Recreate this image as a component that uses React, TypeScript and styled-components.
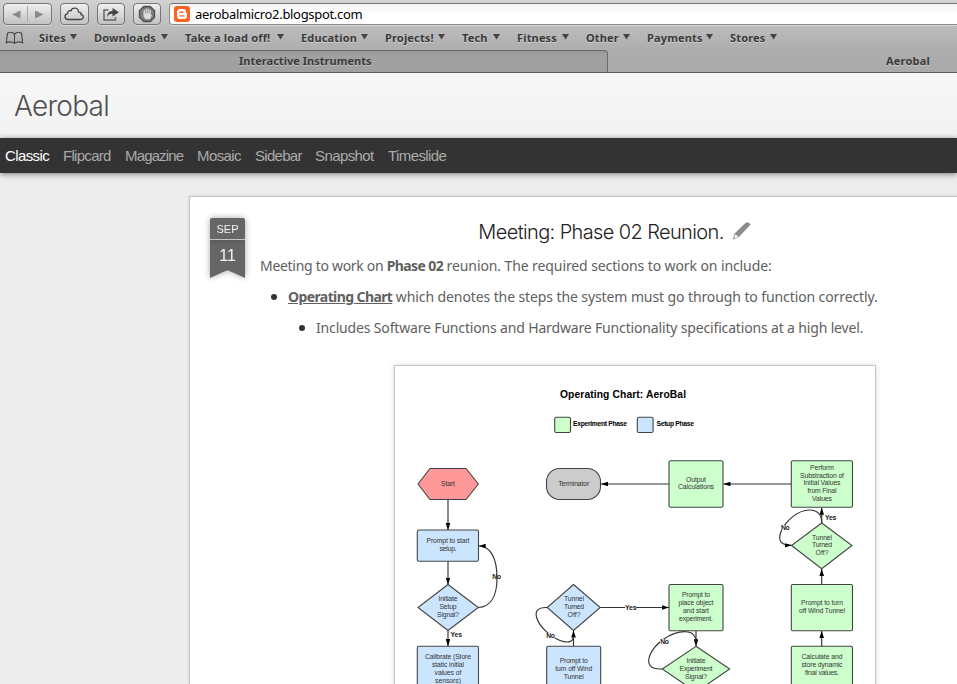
import React from 'react';
import styled, { createGlobalStyle } from 'styled-components';

const GlobalStyle = createGlobalStyle`
  html, body { margin: 0; padding: 0; overflow: hidden; background: #ededed; }
  * { box-sizing: border-box; }
`;

const Window = styled.div`
  width: 957px;
  height: 684px;
  overflow: hidden;
  display: flex;
  flex-direction: column;
  background: #ededed;
  font-family: 'Liberation Sans', Arial, sans-serif;
`;

/* ---------- browser chrome ---------- */

const Chrome = styled.div`
  height: 73px;
  flex: none;
  display: flex;
  flex-direction: column;
  background: linear-gradient(#d2d2d2 0, #bdbdbd 26px, #adadad 50px, #aaaaaa 72px);
  border-bottom: 1px solid #5e5e5e;
  font-family: 'Noto Sans', 'Open Sans', sans-serif;
`;

const AddressRow = styled.div`
  height: 25px;
  display: flex;
  align-items: flex-start;
  padding: 3px 0 0 3px;
`;

const ToolButton = styled.div<{ $w: number; $gap: number }>`
  width: ${(p) => p.$w}px;
  height: 22px;
  margin-right: ${(p) => p.$gap}px;
  flex: none;
  display: flex;
  align-items: center;
  justify-content: center;
  border: 1px solid #777;
  border-radius: 4px;
  background: linear-gradient(#efefef, #c2c2c2);
  box-shadow: 0 1px 0 rgba(255, 255, 255, 0.35);
  svg { display: block; }
`;

const AddressField = styled.div`
  height: 22px;
  flex: 1;
  display: flex;
  align-items: center;
  padding-left: 4px;
  background: linear-gradient(#f3f3f3, #fff 50%);
  border: 1px solid #8b8b8b;
  border-top-color: #747474;
  border-right: 0;
  border-radius: 4px 0 0 4px;
  box-shadow: 0 1px 0 rgba(255, 255, 255, 0.4);
`;

const Url = styled.span`
  margin-left: 5px;
  font-size: 13px;
  line-height: 18px;
  letter-spacing: -0.32px;
  color: #000;
  white-space: nowrap;
`;

const BookmarkRow = styled.div`
  height: 25px;
  display: flex;
  align-items: center;
  padding-left: 5px;
`;

const BookIcon = styled.svg`
  width: 19px;
  height: 14px;
  margin-right: 15px;
  flex: none;
`;

const Bookmark = styled.div<{ $w: number }>`
  width: ${(p) => p.$w}px;
  margin-right: 17px;
  flex: none;
  display: flex;
  align-items: center;
  justify-content: space-between;
  font-size: 11px;
  font-weight: 700;
  line-height: 16px;
  letter-spacing: 0.16px;
  color: #3a3a3a;
  text-shadow: 0 1px 0 rgba(255, 255, 255, 0.4);
  white-space: nowrap;
  svg { margin-bottom: 1px; }
`;

const TabRow = styled.div`
  height: 22px;
  display: flex;
  font-size: 11px;
  font-weight: 700;
  line-height: 19px;
  color: #3a3a3a;
  text-shadow: 0 1px 0 rgba(255, 255, 255, 0.35);
`;

const InactiveTab = styled.div`
  width: 608px;
  padding-left: 239px;
  background: linear-gradient(#989898, #a1a1a1 5px, #a0a0a0);
  border-top: 1px solid #686868;
  border-right: 1px solid #686868;
  border-radius: 0 4px 0 0;
  letter-spacing: 0.02px;
  white-space: nowrap;
`;

const ActiveTab = styled.div`
  flex: 1;
  padding: 1px 0 0 278px;
  letter-spacing: 0.2px;
  white-space: nowrap;
`;

/* ---------- blog ---------- */

const BlogHeader = styled.header`
  height: 65px;
  flex: none;
  padding: 16px 0 0 14px;
  background: linear-gradient(#f7f7f7, #f2f2f2);
`;

const BlogTitle = styled.h1`
  margin: 0;
  font: 300 28px/34px Inter, 'Liberation Sans', sans-serif;
  letter-spacing: -0.75px;
  color: #505050;
`;

const Nav = styled.nav`
  height: 35px;
  flex: none;
  display: flex;
  gap: 14px;
  padding-left: 5px;
  background: #333;
  box-shadow: 0 1px 6px rgba(0, 0, 0, 0.5);
  z-index: 1;
`;

const NavItem = styled.a<{ $w: number; $ls: number; $active?: boolean }>`
  width: ${(p) => p.$w}px;
  font-size: 15px;
  line-height: 36px;
  letter-spacing: ${(p) => p.$ls}px;
  color: ${(p) => (p.$active ? '#fff' : '#aaa')};
  white-space: nowrap;
`;

const Card = styled.main`
  width: 852px;
  flex: 1;
  min-height: 0;
  margin: 23px 0 0 189px;
  display: flex;
  align-items: flex-start;
  padding: 21px 0 0 20px;
  background: #fff;
  border: 1px solid #c6c6c6;
  border-bottom: 0;
  box-shadow: 0 0 3px rgba(0, 0, 0, 0.12);
`;

const RibbonShadow = styled.div`
  flex: none;
  filter: drop-shadow(0 0 3px rgba(0, 0, 0, 0.35));
`;

const Ribbon = styled.div`
  width: 35px;
  height: 60px;
  border-radius: 2px 2px 0 0;
  background: #666;
  clip-path: polygon(0 0, 100% 0, 100% 100%, 50% 52px, 0 100%);
  color: #f4f4f4;
  text-align: center;
`;

const Month = styled.div`
  height: 22px;
  border-bottom: 1px solid #c4c4c4;
  font-size: 11px;
  line-height: 23px;
`;

const Day = styled.div`
  font-size: 16px;
  line-height: 32px;
  background: linear-gradient(#5c5c5c, #666 5px);
`;

const Post = styled.article`
  width: 710px;
  margin-left: 15px;
  flex: none;
  font-family: 'Noto Sans', 'Open Sans', sans-serif;
  font-size: 14px;
  line-height: 21px;
  color: #606060;
  white-space: nowrap;
`;

const PostTitle = styled.h2`
  display: flex;
  justify-content: center;
  align-items: center;
  gap: 8px;
  height: 28px;
  margin: 0 0 9px;
  font: 300 20px/28px Inter, 'Liberation Sans', sans-serif;
  letter-spacing: -0.62px;
  color: #222;
  svg { margin-bottom: 2px; }
`;

const Line = styled.div<{ $indent: number; $ls: number }>`
  height: 21px;
  margin-bottom: 10px;
  padding-left: ${(p) => p.$indent}px;
  display: flex;
  align-items: center;
  white-space: pre;
  letter-spacing: ${(p) => p.$ls}px;
`;

const Tight = styled.span`
  letter-spacing: -0.3px;
`;

const Strong = styled.b<{ $underlined?: boolean }>`
  letter-spacing: -0.6px;
  text-decoration: ${(p) => (p.$underlined ? 'underline' : 'none')};
`;

const Dot = styled.i`
  width: 6px;
  height: 6px;
  margin-right: 11px;
  border-radius: 50%;
  background: #333;
`;

const Figure = styled.figure`
  width: 482px;
  height: 400px;
  margin: 27px 0 0 134px;
  border: 1px solid #c4c4c4;
  background: #fff;
  box-shadow: 0 0 6px rgba(0, 0, 0, 0.14);
  svg { display: block; }
`;

const bookmarks: [string, number][] = [
  ['Sites', 38], ['Downloads', 74], ['Take a load off!', 99], ['Education', 67],
  ['Projects!', 60], ['Tech', 38], ['Fitness', 52], ['Other', 44], ['Payments', 66], ['Stores', 47],
];

/* name, width, letter spacing */
const views: [string, number, number][] = [
  ['Classic', 44, -0.6], ['Flipcard', 48, -0.7], ['Magazine', 58, -0.85], ['Mosaic', 44, -0.6],
  ['Sidebar', 46, -0.7], ['Snapshot', 59, -0.6], ['Timeslide', 58, -0.6],
];

const GREEN = '#ccffcc';
const BLUE = '#cce5ff';

/* [text, width] */
type TextLine = [string, number];

const Label = ({ x, y, lines }: { x: number; y: number; lines: TextLine[] }) => (
  <g fontSize="6.8" fill="#333" textAnchor="middle">
    {lines.map(([t, w], i) => (
      <text key={i} x={x} y={y + i * 7.8} textLength={w}>{t}</text>
    ))}
  </g>
);

const Box = ({ x, y, w, h, fill }: { x: number; y: number; w: number; h: number; fill: string }) => (
  <rect x={x} y={y} width={w} height={h} rx="1.5" fill={fill} />
);

const Arrow = ({ d }: { d: string }) => <path d={d} markerEnd="url(#arrow)" />;

const Chart = () => (
  <svg width="480" height="398" viewBox="395 366 480 398" fontFamily="'Liberation Sans', Arial, sans-serif">
    <defs>
      <marker id="arrow" viewBox="0 0 7 4.6" refX="7" refY="2.3" markerWidth="7" markerHeight="4.6" markerUnits="userSpaceOnUse" orient="auto">
        <path d="M0 0 7 2.3 0 4.6Z" fill="#000" />
      </marker>
    </defs>
    <g fontWeight="700" fill="#000">
      <text x="560" y="398" fontSize="10.3" textLength="126">Operating Chart: AeroBal</text>
      <text x="573" y="426.3" fontSize="6.8" textLength="54">Experiment Phase</text>
      <text x="656.5" y="426.3" fontSize="6.8" textLength="37.5">Setup Phase</text>
    </g>
    <g stroke="#444" strokeWidth="1.1">
      <rect x="554.7" y="417.2" width="15.8" height="15.3" rx="1.5" fill={GREEN} />
      <rect x="637.3" y="417.2" width="15.8" height="15.3" rx="1.5" fill={BLUE} />
      <path d="M418 484 430 468.5H466L478.3 484 466 499.5H430Z" fill="#ff9999" />
      <rect x="546.5" y="468.5" width="54" height="31" rx="13" fill="#ccc" />
      <Box x={669} y={460.7} w={54} h={46.6} fill={GREEN} />
      <Box x={791.3} y={460.7} w={61.2} h={46.6} fill={GREEN} />
      <Box x={417.3} y={530} w={61.2} h={31.3} fill={BLUE} />
      <path d="M448 584.5 478.3 607.5 448 630.5 418 607.5Z" fill={BLUE} />
      <Box x={417.3} y={646.2} w={61.2} h={55} fill={BLUE} />
      <path d="M573.5 584.5 600.2 607.5 573.5 630.5 547.2 607.5Z" fill={BLUE} />
      <Box x={546.7} y={646.2} w={54} h={55} fill={BLUE} />
      <Box x={669} y={584.5} w={54} h={46.3} fill={GREEN} />
      <path d="M696 646.3 729.7 669 696 692 662.3 669Z" fill={GREEN} />
      <path d="M821.7 523 852 545.5 821.7 568.7 791.5 545.5Z" fill={GREEN} />
      <Box x={791.3} y={584.5} w={61.2} h={46.3} fill={GREEN} />
      <Box x={791.3} y={646.2} w={61.2} h={55} fill={GREEN} />
    </g>
    <g stroke="#333" strokeWidth="1.15" fill="none">
      <Arrow d="M791 484H723.5" />
      <Arrow d="M669 484H601" />
      <Arrow d="M448 500V530" />
      <Arrow d="M448 561.5V584.5" />
      <Arrow d="M448 630.5V646" />
      <Arrow d="M478.3 607.5C490 607 497 597 497 578C497 559 491 546 478.7 546" />
      <Arrow d="M600.2 607.5H669" />
      <Arrow d="M573.5 646V630.5" />
      <path d="M547.2 607.5C538 607 535 611 536.5 617C539 627 551 637 560 640.5C568 643.5 573.5 642 573.5 636" />
      <Arrow d="M696 631V646.3" />
      <path d="M662.3 669C651 669.5 646 665 650 655C654 645 670 631 686 631.7C693 632 696 636 696 642" />
      <Arrow d="M821.7 523V507.7" />
      <Arrow d="M821.7 523C822 514 817 510 809 510C798 510 784 522 780.5 533C778 541 781 545.3 791.5 545.3" />
      <Arrow d="M821.7 584.5V568.9" />
      <Arrow d="M821.7 646V631" />
    </g>
    <g fill="#fff">
      <rect x="493.5" y="574.5" width="2.5" height="5" />
      <rect x="546" y="633" width="9" height="5" />
      <rect x="625" y="605" width="11" height="5" />
      <rect x="660" y="639" width="9" height="5" />
      <rect x="781" y="525" width="9" height="5" />
    </g>
    <g fontSize="6.8" fontWeight="700" fill="#222">
      <text x="492.3" y="579.4" textLength="8.8">No</text>
      <text x="450.5" y="637.4" textLength="11.5">Yes</text>
      <text x="546.3" y="638" textLength="8.6">No</text>
      <text x="625" y="610" textLength="11.5">Yes</text>
      <text x="660.3" y="643.5" textLength="8.6">No</text>
      <text x="781" y="529.5" textLength="8.6">No</text>
      <text x="825" y="520" textLength="11.2">Yes</text>
    </g>
    <Label x={448} y={485.8} lines={[['Start', 14]]} />
    <Label x={573.7} y={485.8} lines={[['Terminator', 31]]} />
    <Label x={696} y={481.6} lines={[['Output', 20], ['Calculations', 36]]} />
    <Label x={822} y={469.8} lines={[['Perform', 24], ['Substraction of', 44], ['Initial Values', 37], ['from Final', 29], ['Values', 20]]} />
    <Label x={448} y={543.2} lines={[['Prompt to start', 43], ['setup.', 17]]} />
    <Label x={448} y={601.3} lines={[['Initiate', 19], ['Setup', 17], ['Signal?', 22]]} />
    <Label x={448} y={659.2} lines={[['Calibrate (Store', 46], ['static initial', 32], ['values of', 27], ['sensors)', 26]]} />
    <Label x={574} y={601.3} lines={[['Tunnel', 20], ['Turned', 20], ['Off?', 13]]} />
    <Label x={573.7} y={663} lines={[['Prompt to', 28], ['turn off Wind', 37], ['Tunnel', 20]]} />
    <Label x={696} y={597.2} lines={[['Prompt to', 28], ['place object', 35], ['and start', 26], ['experiment.', 34]]} />
    <Label x={696} y={663} lines={[['Initiate', 19], ['Experiment', 33], ['Signal?', 22]]} />
    <Label x={822} y={539.6} lines={[['Tunnel', 20], ['Turned', 20], ['Off?', 13]]} />
    <Label x={822} y={605.2} lines={[['Prompt to turn', 42], ['off Wind Tunnel', 46]]} />
    <Label x={822} y={659.2} lines={[['Calculate and', 41], ['store dynamic', 41], ['final values.', 34]]} />
  </svg>
);

export default function App() {
  return (
    <Window>
      <GlobalStyle />
      <Chrome>
        <AddressRow>
          <ToolButton $w={49} $gap={8}>
            <svg width="47" height="20">
              <path d="M16.5 6.5V14.5L8 10.5ZM31 6.5V14.5L39.5 10.5Z" fill="#8a8a8a" />
              <path d="M23.5 2V18" stroke="#aaa" />
            </svg>
          </ToolButton>
          <ToolButton $w={29} $gap={8}>
            <svg width="21" height="16" fill="none" stroke="#444" strokeWidth="1.3">
              <path d="M4.5 13.5C.3 13.5-.2 8.4 3.6 7.6 3.6 5 5.4 4.3 6.8 4.9 8.4.9 14.3 1.2 14.6 6.2 17 6 17.6 7.4 17 8.6 20.5 9.2 19.8 13.5 16.5 13.5Z" />
            </svg>
          </ToolButton>
          <ToolButton $w={28} $gap={8}>
            <svg width="18" height="16" fill="none" stroke="#666" strokeWidth="1.5">
              <path d="M6.5 4H2V14H13.5V11" />
              <path d="M5 11C5 7 7.5 5 10.5 5V2L17 6.3 10.5 10.5V7.7C8 7.5 6 8.5 5 11Z" fill="#444" stroke="none" />
            </svg>
          </ToolButton>
          <ToolButton $w={28} $gap={8}>
            <svg width="18" height="18">
              <path d="M5.5.8H12.5L17.2 5.5V12.5L12.5 17.2H5.5L.8 12.5V5.5Z" fill="#505050" />
              <path d="M6 2.2H12L15.8 6V12L12 15.8H6L2.2 12V6Z" fill="#7d7d7d" />
              <path d="M6.2 9V5.6M8.2 8V4.2M10.2 8V4.2M12.1 9V5.4" stroke="#dcdcdc" strokeWidth="1.3" strokeLinecap="round" />
              <path d="M5.6 8.3H12.7V10.5L13.8 9.8 14 10.6 11.8 14.2H7.7L5.6 11.8Z" fill="#dcdcdc" />
            </svg>
          </ToolButton>
          <AddressField>
            <svg width="16" height="16">
              <rect width="16" height="16" rx="3" fill="#fb6423" />
              <path d="M6 3H9Q12 3 12 6V6.6Q12 7 12.7 7 13 7 13 8V10Q13 13 10 13H6Q3 13 3 10V6Q3 3 6 3Z" fill="#fff" />
              <path d="M6 6.2H8.8M6 9.9H10" stroke="#fb6423" strokeWidth="1.4" strokeLinecap="round" />
            </svg>
            <Url>aerobalmicro2.blogspot.com</Url>
          </AddressField>
        </AddressRow>
        <BookmarkRow>
          <BookIcon viewBox="0 0 19 14" fill="none" stroke="#444" strokeWidth="1.1">
            <path d="M9.5 3C7.5 1 4.5 1 2.5 2.2L1.3 11.8C4 10.6 7 10.6 9.5 12.4 12 10.6 15 10.6 17.7 11.8L16.5 2.2C14.5 1 11.5 1 9.5 3ZV12.4" />
          </BookIcon>
          {bookmarks.map(([name, w]) => (
            <Bookmark key={name} $w={w}>
              {name}
              <svg width="7" height="6"><path d="M0 0H7L3.5 5.6Z" fill="#444" /></svg>
            </Bookmark>
          ))}
        </BookmarkRow>
        <TabRow>
          <InactiveTab>Interactive Instruments</InactiveTab>
          <ActiveTab>Aerobal</ActiveTab>
        </TabRow>
      </Chrome>
      <BlogHeader>
        <BlogTitle>Aerobal</BlogTitle>
      </BlogHeader>
      <Nav>
        {views.map(([name, w, ls], i) => (
          <NavItem key={name} $w={w} $ls={ls} $active={i === 0}>{name}</NavItem>
        ))}
      </Nav>
      <Card>
        <RibbonShadow>
          <Ribbon>
            <Month>SEP</Month>
            <Day>11</Day>
          </Ribbon>
        </RibbonShadow>
        <Post>
          <PostTitle>
            Meeting: Phase 02 Reunion.
            <svg width="20" height="20">
              <path d="M2.3 12.8 13.5 2Q15 .4 17.2 2L18.6 3.6 7.5 15.6 1 18.8Z" fill="#8c8c8c" />
              <path d="M3 13.2 6.3 15.4 3 17.2 2.4 16.2Z" fill="#fff" />
            </svg>
          </PostTitle>
          <Line $indent={0} $ls={-0.1}>
            <Tight>Meeting to work on </Tight><Strong>Phase 02</Strong> reunion. The required sections to work on include:
          </Line>
          <Line $indent={11} $ls={-0.1}>
            <Dot /><Strong $underlined>Operating Chart</Strong> which denotes the steps the system must go through to function correctly.
          </Line>
          <Line $indent={39} $ls={-0.16}>
            <Dot />Includes Software Functions and Hardware Functionality specifications at a high level.
          </Line>
          <Figure><Chart /></Figure>
        </Post>
      </Card>
    </Window>
  );
}
